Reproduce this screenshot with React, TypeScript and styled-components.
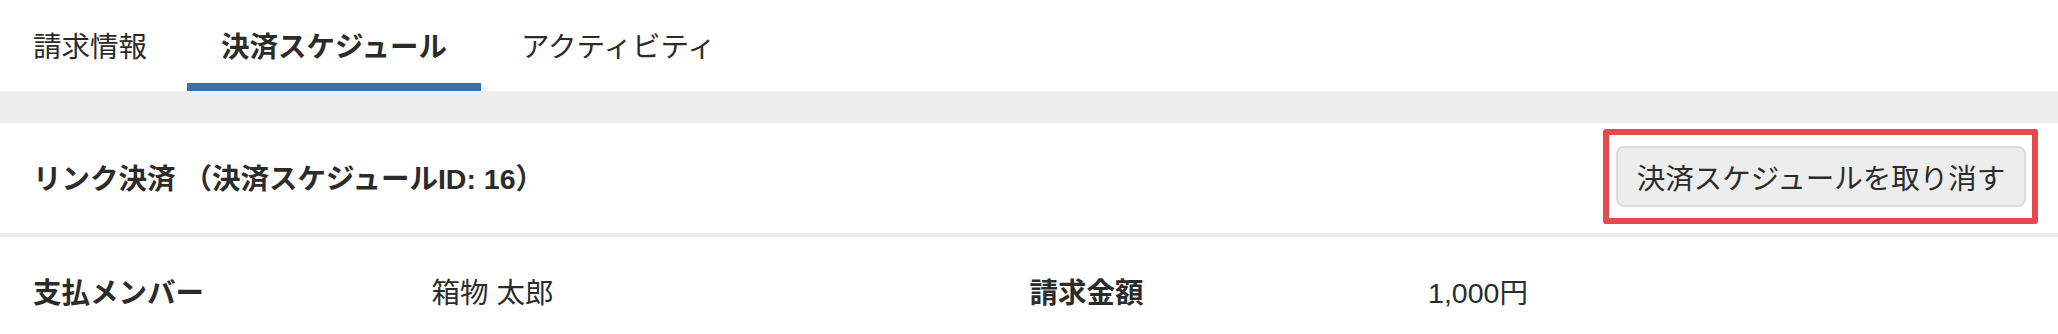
import React from "react";
import styled, { createGlobalStyle } from "styled-components";

const GlobalStyle = createGlobalStyle`
  html, body {
    margin: 0;
    padding: 0;
    background: #ffffff;
  }
  body {
    font-family: "Liberation Sans", "Noto Sans CJK JP", sans-serif;
    color: #2b2b2b;
  }
`;

const tabs = ["請求情報", "決済スケジュール", "アクティビティ"];

const App = () => {
  return (
    <Page>
      <GlobalStyle />
      <TabBar>
        {tabs.map((t, i) => (
          <Tab key={t} active={i === 1}>
            {t}
          </Tab>
        ))}
      </TabBar>
      <Band />
      <Section>
        <SectionHeader>
          <SectionTitle>リンク決済 （決済スケジュールID: 16）</SectionTitle>
          <Highlight>
            <CancelButton type="button">決済スケジュールを取り消す</CancelButton>
          </Highlight>
        </SectionHeader>
        <DetailRow>
          <Label>支払メンバー</Label>
          <Value>箱物 太郎</Value>
          <Label>請求金額</Label>
          <Value>1,000円</Value>
        </DetailRow>
      </Section>
    </Page>
  );
};

export default App;

const Page = styled.div`
  width: 100%;
  min-height: 334px;
  background: #ffffff;
`;

const TabBar = styled.nav`
  display: flex;
  gap: 6px;
  padding-left: 33px;
  height: 91px;
`;

const Tab = styled.div<{ active?: boolean }>`
  box-sizing: border-box;
  height: 91px;
  display: flex;
  align-items: center;
  padding: 6px 34px 0;
  font-size: 28.5px;
  font-weight: ${(p) => (p.active ? 700 : 400)};
  color: #2b2b2b;
  border-bottom: 8px solid ${(p) => (p.active ? "#3274b2" : "transparent")};
  white-space: nowrap;

  &:first-child {
    padding-left: 0;
  }
`;

const Band = styled.div`
  height: 32px;
  background: #ededed;
`;

const Section = styled.section`
  background: #ffffff;
`;

const SectionHeader = styled.div`
  box-sizing: border-box;
  height: 114px;
  display: flex;
  align-items: center;
  justify-content: space-between;
  padding: 0 32px 4px 33px;
  border-bottom: 4px solid #ededed;
`;

const SectionTitle = styled.h2`
  margin: 0;
  font-size: 28.5px;
  font-weight: 700;
  color: #2b2b2b;
  white-space: nowrap;
`;

const Highlight = styled.div`
  position: relative;
  display: flex;

  &::after {
    content: "";
    position: absolute;
    top: -17px;
    bottom: -17px;
    left: -13px;
    right: -12px;
    border: 6px solid #e5484d;
    border-radius: 3px;
    pointer-events: none;
  }
`;

const CancelButton = styled.button`
  box-sizing: border-box;
  width: 410px;
  height: 61px;
  padding: 0;
  font-family: "Liberation Sans", "Noto Sans CJK JP", sans-serif;
  font-size: 28.5px;
  color: #2b2b2b;
  background: #ededed;
  border: 2px solid #dcdcdc;
  border-radius: 8px;
  white-space: nowrap;
  cursor: pointer;
`;

const DetailRow = styled.div`
  display: grid;
  grid-template-columns: 2fr 3fr 2fr 3fr;
  align-items: center;
  height: 106px;
  padding: 0 32px 0 33px;
`;

const Label = styled.div`
  font-size: 28.5px;
  font-weight: 700;
  color: #2b2b2b;
`;

const Value = styled.div`
  font-size: 28.5px;
  font-weight: 400;
  color: #2b2b2b;
`;
